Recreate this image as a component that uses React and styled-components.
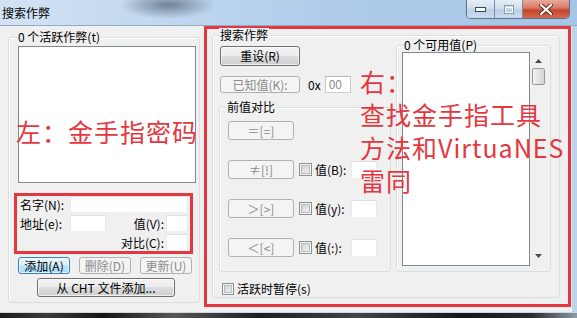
import React from 'react';
import styled, { createGlobalStyle, css } from 'styled-components';

const GlobalStyle = createGlobalStyle`
  html, body {
    margin: 0;
    padding: 0;
  }
  body {
    width: 577px;
    height: 318px;
    overflow: hidden;
    background: linear-gradient(90deg, #1c1c1c 0%, #3b3b3b 8%, #151515 18%, #575757 30%, #1f1f1f 45%, #444 62%, #161616 80%, #2a2a2a 92%, #8d9aa8 100%);
    font-family: "Noto Sans CJK SC", "Noto Sans", sans-serif;
    font-size: 12px;
    color: #000;
  }
`;

const Window = styled.div`
  position: relative;
  width: 577px;
  height: 312px;
  display: flex;
  flex-direction: column;
  background: #bcd3ea;
  border-bottom: 1px solid #c9d9ea;
`;

const TitleBar = styled.div`
  height: 25px;
  flex-shrink: 0;
  display: flex;
  align-items: flex-start;
  background:
    radial-gradient(ellipse 48px 14px at 168px 5px, rgba(35, 45, 60, 0.5), rgba(35, 45, 60, 0)),
    linear-gradient(90deg, #d3e3f3 0%, #bfd7ef 30%, #afcbea 60%, #a6c4e6 100%);
  border-bottom: 1px solid #93aac3;
`;

const Title = styled.div`
  padding: 5px 0 0 2px;
  line-height: 15px;
`;

const CaptionButtons = styled.div`
  margin: 0 7px 0 auto;
  display: flex;
  height: 18px;
  border: 1px solid #5e6f86;
  border-top: 0;
  border-radius: 0 0 5px 5px;
  overflow: hidden;
`;

const CaptionButton = styled.div`
  width: ${p => p.$w}px;
  display: flex;
  align-items: center;
  justify-content: center;
  background: linear-gradient(#e6eef7 0%, #d2dfee 45%, #bccfe5 55%, #cadcef 100%);
  & + & {
    border-left: 1px solid #7b8ca3;
  }
  ${p => p.$close && css`
    background: linear-gradient(#eaa99c 0%, #d97763 45%, #c6452f 55%, #d3694f 100%);
  `}
`;

const Body = styled.div`
  flex: 1;
  display: flex;
`;

const Client = styled.div`
  width: 572px;
  flex-shrink: 0;
  display: flex;
  align-items: flex-start;
  background: #f0f0f0;
`;

const LeftPane = styled.div`
  width: 204px;
  flex-shrink: 0;
`;

const GroupFrame = styled.div`
  position: relative;
  box-sizing: border-box;
  flex-shrink: 0;
  border: 1px solid #d5dfe5;
  border-radius: 3px;
  box-shadow: inset 1px 1px 0 #fff;
`;

const Caption = styled.span`
  position: absolute;
  top: -8px;
  left: ${p => p.$left}px;
  padding: 0 1px;
  background: #f0f0f0;
  line-height: 14px;
  white-space: nowrap;
`;

const LeftGroup = styled(GroupFrame)`
  width: 192px;
  height: 266px;
  margin: 11px 0 0 8px;
  padding: 8px 0 0 5px;
`;

const ListBox = styled.div`
  box-sizing: border-box;
  width: ${p => p.$w}px;
  height: ${p => p.$h}px;
  margin-left: ${p => p.$ml || 0}px;
  background: #fff;
  border: 1px solid #828790;
`;

const Highlight = styled.div`
  box-sizing: border-box;
  border: 3px solid #e4373f;
`;

const FieldsBox = styled(Highlight)`
  width: 179px;
  margin-top: 10px;
  padding-left: 3px;
  display: flex;
  flex-direction: column;
  gap: 2px;
`;

const FieldRow = styled.div`
  display: flex;
  align-items: center;
  height: 17px;
`;

const Label = styled.span`
  width: ${p => (p.$w ? `${p.$w}px` : 'auto')};
  margin-left: ${p => p.$ml || 0}px;
  text-align: ${p => (p.$right ? 'right' : 'left')};
  padding-right: ${p => (p.$right ? 2 : 0)}px;
  box-sizing: border-box;
  line-height: 14px;
  white-space: nowrap;
`;

const TextBox = styled.div`
  box-sizing: border-box;
  width: ${p => p.$w}px;
  height: ${p => p.$h || 17}px;
  margin-left: ${p => p.$ml || 0}px;
  padding-left: 3px;
  background: #fff;
  border: 1px solid;
  border-color: #dedfe4 #e8e9ed #eff0f2 #e8e9ed;
  color: #8d8d8d;
  line-height: 14px;
  ${p => p.$framed && css`
    border-color: #b8b9bd #c8c9cc #d0d1d4 #c8c9cc;
  `}
`;

const Button = styled.button`
  box-sizing: border-box;
  width: ${p => p.$w}px;
  height: ${p => p.$h || 19}px;
  margin: ${p => p.$mt || 0}px 0 0 ${p => p.$ml || 0}px;
  padding: 0;
  flex-shrink: 0;
  font: inherit;
  font-size: 12px;
  line-height: 12px;
  color: #000;
  border: 1px solid #707070;
  border-radius: 3px;
  background: linear-gradient(#f3f3f3 0%, #ebebeb 49%, #dddddd 50%, #cfcfcf 100%);
  box-shadow: inset 0 0 0 1px rgba(255, 255, 255, 0.7);
  ${p => p.disabled && css`
    color: #8a8a8a;
    border-color: #adb2b5;
    background: #f4f4f4;
    box-shadow: none;
  `}
  ${p => p.$focused && css`
    border-color: #3c7fb1;
    background: linear-gradient(#eaf6fd 0%, #d9f0fc 49%, #bee6fd 50%, #a7d9f5 100%);
  `}
`;

const ButtonRow = styled.div`
  display: flex;
  gap: 9px;
  margin: 3px 0 0 4px;
`;

const Check = styled.span`
  box-sizing: border-box;
  width: ${p => p.$size || 13}px;
  height: ${p => p.$size || 13}px;
  margin-left: ${p => p.$ml || 0}px;
  flex-shrink: 0;
  border: 1px solid #8e8f8f;
  background: linear-gradient(135deg, #c9c9c9 0%, #e6e6e6 60%, #f4f4f4 100%);
  box-shadow: inset 0 0 0 1px #f4f4f4, inset 0 0 0 2px #b9bcc0;
`;

const RightBox = styled(Highlight)`
  width: 367px;
  height: 281px;
  padding: 3px 0 0 2px;
`;

const SearchGroup = styled(GroupFrame)`
  width: 348px;
  height: 263px;
  margin: 3px 0 0 3px;
  display: flex;
  flex-direction: column;
`;

const TopRow = styled.div`
  display: flex;
  align-items: flex-start;
  padding-left: 6px;
`;

const Column = styled.div`
  width: 172px;
  display: flex;
  flex-direction: column;
  align-items: flex-start;
`;

const KnownRow = styled.div`
  display: flex;
  align-items: center;
  margin: 10px 0 0 1px;
`;

const CompareGroup = styled(GroupFrame)`
  width: 172px;
  height: 165px;
  margin-top: 14px;
  padding: 13px 0 0 8px;
  display: flex;
  flex-direction: column;
  gap: 20px;
`;

const CompareRow = styled.div`
  display: flex;
  align-items: center;
  height: 19px;
`;

const ResultGroup = styled(GroupFrame)`
  width: 155px;
  height: 227px;
  margin: 9px 0 0 5px;
  padding: 6px 0 0 5px;
  display: flex;
`;

const ScrollBar = styled.div`
  width: 17px;
  height: 214px;
  box-sizing: border-box;
  padding: 7px 0 8px;
  display: flex;
  flex-direction: column;
  align-items: center;
`;

const Spacer = styled.div`
  flex: 1;
`;

const Thumb = styled.div`
  box-sizing: border-box;
  width: 13px;
  height: 17px;
  margin: 5px 0 0 -1px;
  border: 1px solid #979797;
  border-radius: 2px;
  background: linear-gradient(90deg, #f3f3f3, #e2e2e2 50%, #d6d6d6);
`;

const PauseRow = styled.div`
  display: flex;
  align-items: center;
  gap: 3px;
  margin: 11px 0 0 9px;
  height: 12px;
`;

const Note = styled.div`
  position: absolute;
  left: ${p => p.$x}px;
  top: ${p => p.$y}px;
  color: #e4373f;
  font-size: 25px;
  line-height: 33px;
  letter-spacing: 1px;
  white-space: nowrap;
`;

const Arrow = ({ down }) => (
  <svg width="7" height="4" viewBox="0 0 7 4">
    <path d={down ? 'M0 0H7L3.5 4Z' : 'M0 4H7L3.5 0Z'} fill="#4a4a4a" />
  </svg>
);

function App() {
  return (
    <>
      <GlobalStyle />
      <Window>
        <TitleBar>
          <Title>搜索作弊</Title>
          <CaptionButtons>
            <CaptionButton $w={27}>
              <svg width="11" height="5" viewBox="0 0 11 5">
                <rect x="0.5" y="0.5" width="10" height="4" fill="#fff" stroke="#3b4a5e" />
              </svg>
            </CaptionButton>
            <CaptionButton $w={27}>
              <svg width="10" height="9" viewBox="0 0 10 9">
                <rect x="0.5" y="0.5" width="9" height="8" fill="none" stroke="#8b9bb0" />
                <rect x="1.5" y="2.5" width="7" height="5" fill="none" stroke="#f5f8fb" />
              </svg>
            </CaptionButton>
            <CaptionButton $w={46} $close>
              <svg width="14" height="11" viewBox="0 0 14 11">
                <path d="M2 1L12 10M12 1L2 10" stroke="#5a2a22" strokeWidth="4" strokeLinecap="round" />
                <path d="M2 1L12 10M12 1L2 10" stroke="#fff" strokeWidth="2.2" strokeLinecap="round" />
              </svg>
            </CaptionButton>
          </CaptionButtons>
        </TitleBar>
        <Body>
          <Client>
            <LeftPane>
              <LeftGroup>
                <Caption $left={8}>0 个活跃作弊(t)</Caption>
                <ListBox $w={178} $h={137} $ml={4} />
                <FieldsBox>
                  <FieldRow>
                    <Label $w={50}>名字(N):</Label>
                    <TextBox $w={118} />
                  </FieldRow>
                  <FieldRow>
                    <Label $w={50}>地址(e):</Label>
                    <TextBox $w={36} />
                    <Label $w={60} $right>值(V):</Label>
                    <TextBox $w={22} />
                  </FieldRow>
                  <FieldRow>
                    <Label $w={146} $right>对比(C):</Label>
                    <TextBox $w={22} />
                  </FieldRow>
                </FieldsBox>
                <ButtonRow>
                  <Button $w={52} $h={17} $focused>添加(A)</Button>
                  <Button $w={52} $h={17} disabled>删除(D)</Button>
                  <Button $w={52} $h={17} disabled>更新(U)</Button>
                </ButtonRow>
                <Button $w={138} $h={19} $ml={23} $mt={4}>从 CHT 文件添加...</Button>
              </LeftGroup>
            </LeftPane>
            <RightBox>
              <SearchGroup>
                <Caption $left={6}>搜索作弊</Caption>
                <TopRow>
                  <Column>
                    <Button $w={80} $h={20} $ml={1} $mt={10}>重设(R)</Button>
                    <KnownRow>
                      <Button $w={80} $h={17} disabled>已知值(K):</Button>
                      <Label $ml={8}>0x</Label>
                      <TextBox $w={26} $ml={4} $framed>00</TextBox>
                    </KnownRow>
                    <CompareGroup>
                      <Caption $left={6}>前值对比</Caption>
                      <CompareRow>
                        <Button $w={66} disabled>＝[=]</Button>
                      </CompareRow>
                      <CompareRow>
                        <Button $w={66} disabled>≠[!]</Button>
                        <Check $ml={5} />
                        <Label $w={36} $ml={3}>值(B):</Label>
                        <TextBox $w={26} $h={18} />
                      </CompareRow>
                      <CompareRow>
                        <Button $w={66} disabled>＞[&gt;]</Button>
                        <Check $ml={5} />
                        <Label $w={36} $ml={3}>值(y):</Label>
                        <TextBox $w={26} $h={18} />
                      </CompareRow>
                      <CompareRow>
                        <Button $w={66} disabled>＜[&lt;]</Button>
                        <Check $ml={5} />
                        <Label $w={36} $ml={3}>值(:):</Label>
                        <TextBox $w={26} $h={18} />
                      </CompareRow>
                    </CompareGroup>
                  </Column>
                  <ResultGroup>
                    <Caption $left={6}>0 个可用值(P)</Caption>
                    <ListBox $w={128} $h={214} />
                    <ScrollBar>
                      <Arrow />
                      <Thumb />
                      <Spacer />
                      <Arrow down />
                    </ScrollBar>
                  </ResultGroup>
                </TopRow>
                <PauseRow>
                  <Check $size={12} />
                  <Label>活跃时暂停(s)</Label>
                </PauseRow>
              </SearchGroup>
            </RightBox>
          </Client>
        </Body>
        <Note $x={16} $y={115}>左：金手指密码</Note>
        <Note $x={360} $y={65}>
          右：<br />
          查找金手指工具<br />
          方法和VirtuaNES<br />
          雷同
        </Note>
      </Window>
    </>
  );
}

export default App;
